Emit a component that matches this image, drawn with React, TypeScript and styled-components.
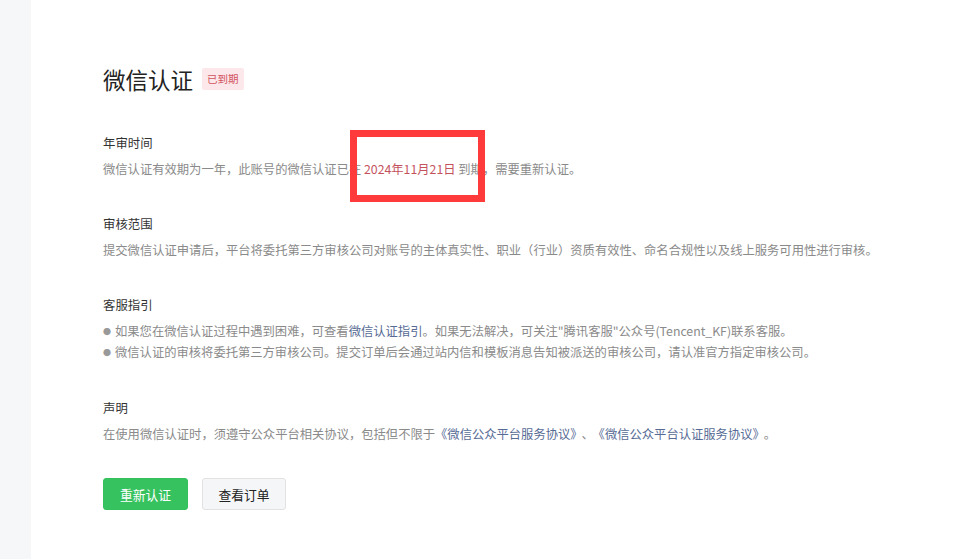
import styled, { createGlobalStyle } from "styled-components";

const GlobalStyle = createGlobalStyle`
  body {
    margin: 0;
    background: #ffffff;
    font-family: "Noto Sans CJK SC", "Noto Sans", sans-serif;
  }
`;

function App(): JSX.Element {
  return (
    <Page>
      <GlobalStyle />
      <Sidebar />
      <Card>
        <Header>
          <Title>微信认证</Title>
          <Badge>已到期</Badge>
        </Header>

        <Section>
          <SectionTitle>年审时间</SectionTitle>
          <Text>
            微信认证有效期为一年，此账号的微信认证已在{" "}
            <DateText>2024年11月21日</DateText> 到期，需要重新认证。
          </Text>
        </Section>

        <Section>
          <SectionTitle>审核范围</SectionTitle>
          <Text>
            提交微信认证申请后，平台将委托第三方审核公司对账号的主体真实性、职业（行业）资质有效性、命名合规性以及线上服务可用性进行审核。
          </Text>
        </Section>

        <Section>
          <SectionTitle>客服指引</SectionTitle>
          <BulletList>
            <Bullet>
              如果您在微信认证过程中遇到困难，可查看<Link>微信认证指引</Link>
              。如果无法解决，可关注"腾讯客服"公众号(Tencent_KF)联系客服。
            </Bullet>
            <Bullet>
              微信认证的审核将委托第三方审核公司。提交订单后会通过站内信和模板消息告知被派送的审核公司，请认准官方指定审核公司。
            </Bullet>
          </BulletList>
        </Section>

        <Section>
          <SectionTitle>声明</SectionTitle>
          <Text>
            在使用微信认证时，须遵守公众平台相关协议，包括但不限于
            <Link>《微信公众平台服务协议》</Link>
            <Punct>、</Punct>
            <Link>《微信公众平台认证服务协议》</Link>
            <Punct>。</Punct>
          </Text>
        </Section>

        <Actions>
          <Button primary>重新认证</Button>
          <Button>查看订单</Button>
        </Actions>
      </Card>
      <Highlight />
    </Page>
  );
}

export default App;

const Page = styled.div`
  position: relative;
  display: flex;
  width: 972px;
  height: 559px;
  overflow: hidden;
`;

const Sidebar = styled.div`
  width: 31px;
  flex-shrink: 0;
  background: #f6f7f9;
`;

const Card = styled.div`
  flex: 1;
  background: #ffffff;
  padding: 66px 72px 0;
  color: #8a8a8a;
  font-size: 12.3px;
`;

const Header = styled.div`
  display: flex;
  align-items: center;
  gap: 9px;
`;

const Title = styled.h1`
  margin: 0;
  font-size: 22.5px;
  line-height: 26px;
  font-weight: 400;
  color: #222222;
`;

const Badge = styled.span`
  background: #fce8ea;
  color: #d2545f;
  font-size: 10.5px;
  line-height: 22px;
  padding: 0 5px;
  border-radius: 2px;
`;

const Section = styled.section`
  margin-top: 35px;
  &:first-of-type {
    margin-top: 41px;
  }
`;

const SectionTitle = styled.h2`
  margin: 0 0 6px;
  font-size: 12.4px;
  line-height: 20px;
  font-weight: 400;
  color: #333333;
`;

const Text = styled.p`
  margin: 0;
  line-height: 20px;
  white-space: nowrap;
`;

const DateText = styled.span`
  color: #c4525d;
`;

const Link = styled.a`
  color: #576b95;
  cursor: pointer;
`;

const Punct = styled.span`
  margin: 0 5px;
`;

const BulletList = styled.ul`
  margin: 2px 0 0;
  padding: 0;
  list-style: none;
`;

const Bullet = styled.li`
  line-height: 21px;
  white-space: nowrap;
  &::before {
    content: "●";
    font-size: 8px;
    margin-right: 4px;
    vertical-align: 1px;
    color: #999999;
  }
`;

const Actions = styled.div`
  display: flex;
  gap: 14px;
  margin-top: 34px;
`;

const Button = styled.button<{ primary?: boolean }>`
  width: ${(p) => (p.primary ? "85px" : "84px")};
  height: 32px;
  border-radius: 3px;
  font-family: inherit;
  font-size: 12.8px;
  cursor: pointer;
  border: 1px solid ${(p) => (p.primary ? "#34c15c" : "#e2e2e2")};
  background: ${(p) => (p.primary ? "#36c25e" : "#f5f6f7")};
  color: ${(p) => (p.primary ? "#ffffff" : "#222222")};
`;

const Highlight = styled.div`
  position: absolute;
  left: 350px;
  top: 130px;
  width: 135px;
  height: 72px;
  box-sizing: border-box;
  border: 7px solid #ff3a3a;
  pointer-events: none;
`;
